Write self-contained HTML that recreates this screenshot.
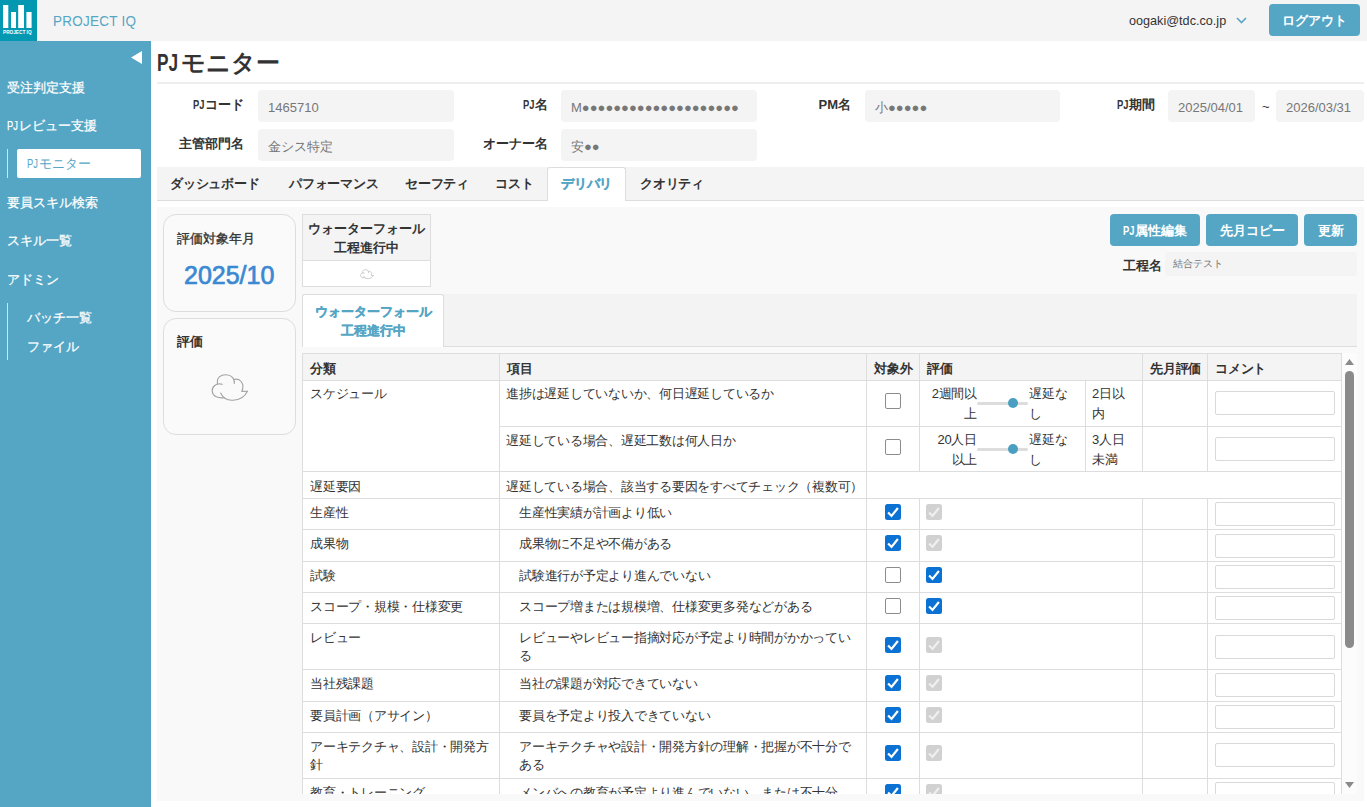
<!DOCTYPE html>
<html><head><meta charset="utf-8">
<style>
*{box-sizing:border-box;margin:0;padding:0}
html,body{width:1367px;height:807px;overflow:hidden;background:#fff}
body{font-family:"Liberation Sans",sans-serif;color:#333;position:relative;font-size:13px}
.abs{position:absolute;white-space:nowrap}
#hdr{position:absolute;left:0;top:0;width:1367px;height:41px;background:#f4f4f4}
#logo{position:absolute;left:0;top:0;width:37px;height:41px;background:#0398b2}
#side{position:absolute;left:0;top:41px;width:151px;height:766px;background:#55a6c5}
.nav{position:absolute;left:7px;color:#fff;font-size:13px;line-height:20px;white-space:nowrap;-webkit-text-stroke:.25px #fff}
.btn{position:absolute;background:#55a6c5;color:#fff;border-radius:4px;font-size:13px;font-weight:bold;text-align:center;line-height:34px;height:32px;white-space:nowrap}
.lbl{position:absolute;font-weight:bold;font-size:13px;line-height:20px;text-align:right;white-space:nowrap}
.inp{position:absolute;background:#f4f4f4;border-radius:4px;height:32px;color:#777;font-size:13px;line-height:20px;padding-top:8px;padding-left:10px;white-space:nowrap}
#tabs{position:absolute;left:157px;top:167px;width:1207px;height:34px;background:#f4f4f4;border-bottom:1px solid #ddd}
.tab{position:absolute;top:0;height:33px;line-height:33px;font-weight:bold;font-size:13px;letter-spacing:-.25px;white-space:nowrap}
#panel{position:absolute;left:157px;top:207px;width:1207px;height:594px;background:#f9f9f9}
.pj{display:inline-block;transform:scaleX(.72);transform-origin:0 0;margin-right:-.24em}
.lbl .pj,.btn .pj{margin-right:-.31em}
.card{position:absolute;left:163px;width:133px;background:#fafafa;border:1px solid #ddd;border-radius:13px}
</style></head><body>
<div id="hdr"></div>
<div id="logo">
  <svg width="37" height="41" viewBox="0 0 37 41" style="position:absolute;left:0;top:0">
    <rect x="3" y="5" width="5.3" height="23" fill="#fff"/>
    <rect x="11" y="12" width="5" height="16" fill="#fff"/>
    <rect x="18.2" y="5" width="5.8" height="23" fill="#fff"/>
    <rect x="26.4" y="12" width="5.2" height="16" fill="#fff"/>
    <text x="3" y="34.2" font-size="4.9" fill="#fff" font-family="Liberation Sans" font-weight="bold" textLength="28.6" lengthAdjust="spacingAndGlyphs">PROJECT IQ</text>
  </svg>
</div>
<div class="abs" style="left:53px;top:11px;font-size:15.5px;line-height:20px;color:#55a6c5;letter-spacing:.3px;transform:scaleX(.87);transform-origin:0 0">PROJECT IQ</div>
<div class="abs" style="left:1129px;top:11px;font-size:13.6px;line-height:20px;color:#333;transform:scaleX(.93);transform-origin:0 0">oogaki@tdc.co.jp</div>
<svg class="abs" style="left:1236px;top:17px" width="11" height="7" viewBox="0 0 11 7"><path d="M1 1 L5.5 5.5 L10 1" stroke="#55a6c5" stroke-width="1.6" fill="none"/></svg>
<div class="btn" style="left:1269px;top:4px;width:91px">ログアウト</div>

<div id="side">
  <svg class="abs" style="left:131px;top:10px" width="12" height="13" viewBox="0 0 12 13"><path d="M0 6.5 L11 0 L11 13 Z" fill="#fff"/></svg>
  <div class="nav" style="top:37px">受注判定支援</div>
  <div class="nav" style="top:75px"><span class="pj">PJ</span>レビュー支援</div>
  <div class="abs" style="left:7px;top:108px;width:1px;height:29px;background:#cfe5ee"></div>
  <div class="abs" style="left:17px;top:108px;width:124px;height:29px;background:#fff;border-radius:2px;color:#55a6c5;font-size:13px;line-height:29px;padding-left:10px"><span class="pj">PJ</span>モニター</div>
  <div class="nav" style="top:152px">要員スキル検索</div>
  <div class="nav" style="top:190px">スキル一覧</div>
  <div class="nav" style="top:229px">アドミン</div>
  <div class="abs" style="left:7px;top:262px;width:1px;height:57px;background:#cfe5ee"></div>
  <div class="nav" style="left:27px;top:267px">バッチ一覧</div>
  <div class="nav" style="left:27px;top:296px">ファイル</div>
</div>

<div class="abs" style="left:157px;top:48px;font-size:24px;line-height:30px;font-weight:bold;color:#333"><span class="pj">PJ</span>モニター</div>
<div class="abs" style="left:157px;top:82px;width:1207px;height:2px;background:#eee"></div>

<div class="lbl" style="left:157px;top:95px;width:87px"><span class="pj">PJ</span>コード</div>
<div class="inp" style="left:258px;top:90px;width:196px">1465710</div>
<div class="lbl" style="left:454px;top:95px;width:94px"><span class="pj">PJ</span>名</div>
<div class="inp" style="left:561px;top:90px;width:196px">M●●●●●●●●●●●●●●●●●●●●</div>
<div class="lbl" style="left:757px;top:95px;width:94px">PM名</div>
<div class="inp" style="left:865px;top:90px;width:195px">小●●●●●</div>
<div class="lbl" style="left:1060px;top:95px;width:95px"><span class="pj">PJ</span>期間</div>
<div class="inp" style="left:1168px;top:90px;width:87px">2025/04/01</div>
<div class="abs" style="left:1262px;top:97px;font-size:13px;line-height:20px">~</div>
<div class="inp" style="left:1276px;top:90px;width:88px">2026/03/31</div>

<div class="lbl" style="left:157px;top:134px;width:87px">主管部門名</div>
<div class="inp" style="left:258px;top:129px;width:196px">金シス特定</div>
<div class="lbl" style="left:454px;top:134px;width:94px">オーナー名</div>
<div class="inp" style="left:561px;top:129px;width:196px">安●●</div>

<div id="tabs">
  <div class="tab" style="left:13px">ダッシュボード</div>
  <div class="tab" style="left:132px">パフォーマンス</div>
  <div class="tab" style="left:248px">セーフティ</div>
  <div class="tab" style="left:338px">コスト</div>
  <div class="tab" style="left:390px;top:0;width:79px;height:34px;background:#fff;border:1px solid #ddd;border-bottom:none;border-radius:3px 3px 0 0;color:#55a6c5;padding-left:13px;line-height:32px;-webkit-text-stroke:.3px #55a6c5">デリバリ</div>
  <div class="tab" style="left:483px">クオリティ</div>
</div>

<div id="panel"></div>
<div class="card" style="top:214px;height:98px">
  <div class="abs" style="left:13px;top:14px;font-size:13px;line-height:20px;-webkit-text-stroke:.35px #333">評価対象年月</div>
  <div class="abs" style="left:20px;top:45px;font-size:25px;line-height:30px;color:#3a89d2;-webkit-text-stroke:.7px #3a89d2">2025/10</div>
</div>
<div class="card" style="top:318px;height:117px">
  <div class="abs" style="left:13px;top:13px;font-size:13px;line-height:20px;font-weight:bold">評価</div>
  
</div>

<div class="abs" style="left:302px;top:214px;width:129px;height:73px;border:1px solid #ddd;background:#fff">
  <div style="height:46px;background:#f4f4f4;border-bottom:1px solid #ddd;font-weight:bold;font-size:13px;line-height:19px;text-align:center;padding-top:4px">ウォーターフォール<br>工程進行中</div>
</div>

<div class="btn" style="left:1110px;top:214px;width:90px"><span class="pj">PJ</span>属性編集</div>
<div class="btn" style="left:1206px;top:214px;width:92px">先月コピー</div>
<div class="btn" style="left:1304px;top:214px;width:53px">更新</div>
<div class="lbl" style="left:1100px;top:256px;width:62px;font-size:13px">工程名</div>
<div class="inp" style="left:1165px;top:252px;width:192px;height:24px;line-height:24px;padding-top:0;font-size:10px;padding-left:8px">結合テスト</div>

<div class="abs" style="left:302px;top:294px;width:1055px;height:53px;background:#f3f3f3;border-bottom:1px solid #ddd"></div>
<div class="abs" style="left:302px;top:294px;width:142px;height:53px;background:#fff;border:1px solid #ddd;border-bottom:none;border-radius:3px 3px 0 0;color:#55a6c5;font-weight:bold;font-size:13px;line-height:19px;text-align:center;padding-top:7px;-webkit-text-stroke:.3px #55a6c5">ウォーターフォール<br>工程進行中</div>

<svg style="position:absolute;left:208px;top:370px" width="44" height="34" viewBox="208 370 44 34"><g stroke="#a3a3a3" stroke-width="1.1"><g fill="none" stroke-linecap="round">
<path d="M217.5 383.6 C216.5 377.5 220.5 374.8 226 374.8 C231.5 374.8 235 378.5 234.3 383.5"/>
<path d="M233.7 379.6 C240 377.6 245 383.5 241.9 391.4 L247.4 391.3"/>
<path d="M222.3 384.3 C216 382.5 211.8 387 212.2 391 C212.5 396 217 398.5 224.6 397.8"/>
<path d="M220.6 393 C223.5 399 229 400.5 233 400.2 C240 400 245 396.5 247.4 391.3"/>
</g></g></svg>
<svg style="position:absolute;left:359px;top:268px" width="16" height="12" viewBox="208 370 44 34" preserveAspectRatio="none"><g stroke="#c8c8c8" stroke-width="2.6"><g fill="none" stroke-linecap="round">
<path d="M217.5 383.6 C216.5 377.5 220.5 374.8 226 374.8 C231.5 374.8 235 378.5 234.3 383.5"/>
<path d="M233.7 379.6 C240 377.6 245 383.5 241.9 391.4 L247.4 391.3"/>
<path d="M222.3 384.3 C216 382.5 211.8 387 212.2 391 C212.5 396 217 398.5 224.6 397.8"/>
<path d="M220.6 393 C223.5 399 229 400.5 233 400.2 C240 400 245 396.5 247.4 391.3"/>
</g></g></svg>
<style>.t{position:absolute;white-space:nowrap;font-size:13px;line-height:18px;color:#333;letter-spacing:-.25px}</style><div style="position:absolute;left:302px;top:353px;width:1055px;height:441px;overflow:hidden;background:#fff"><div style="position:absolute;left:0px;top:0px;width:1040px;height:27px;background:#f4f4f4"></div><div style="position:absolute;left:0px;top:0px;width:1040px;height:1px;background:#ddd"></div><div style="position:absolute;left:0px;top:27px;width:1040px;height:1px;background:#ddd"></div><div style="position:absolute;left:197px;top:73px;width:843px;height:1px;background:#ddd"></div><div style="position:absolute;left:0px;top:118px;width:1040px;height:1px;background:#ddd"></div><div style="position:absolute;left:0px;top:145px;width:1040px;height:1px;background:#ddd"></div><div style="position:absolute;left:0px;top:176px;width:1040px;height:1px;background:#ddd"></div><div style="position:absolute;left:0px;top:208px;width:1040px;height:1px;background:#ddd"></div><div style="position:absolute;left:0px;top:239px;width:1040px;height:1px;background:#ddd"></div><div style="position:absolute;left:0px;top:270px;width:1040px;height:1px;background:#ddd"></div><div style="position:absolute;left:0px;top:316px;width:1040px;height:1px;background:#ddd"></div><div style="position:absolute;left:0px;top:348px;width:1040px;height:1px;background:#ddd"></div><div style="position:absolute;left:0px;top:379px;width:1040px;height:1px;background:#ddd"></div><div style="position:absolute;left:0px;top:425px;width:1040px;height:1px;background:#ddd"></div><div style="position:absolute;left:0px;top:471px;width:1040px;height:1px;background:#ddd"></div><div style="position:absolute;left:0px;top:0px;width:1px;height:28px;background:#ddd"></div><div style="position:absolute;left:197px;top:0px;width:1px;height:28px;background:#ddd"></div><div style="position:absolute;left:564px;top:0px;width:1px;height:28px;background:#ddd"></div><div style="position:absolute;left:617px;top:0px;width:1px;height:28px;background:#ddd"></div><div style="position:absolute;left:840px;top:0px;width:1px;height:28px;background:#ddd"></div><div style="position:absolute;left:905px;top:0px;width:1px;height:28px;background:#ddd"></div><div style="position:absolute;left:1039px;top:0px;width:1px;height:28px;background:#ddd"></div><div style="position:absolute;left:0px;top:27px;width:1px;height:92px;background:#ddd"></div><div style="position:absolute;left:197px;top:27px;width:1px;height:92px;background:#ddd"></div><div style="position:absolute;left:564px;top:27px;width:1px;height:92px;background:#ddd"></div><div style="position:absolute;left:617px;top:27px;width:1px;height:92px;background:#ddd"></div><div style="position:absolute;left:783px;top:27px;width:1px;height:92px;background:#ddd"></div><div style="position:absolute;left:840px;top:27px;width:1px;height:92px;background:#ddd"></div><div style="position:absolute;left:905px;top:27px;width:1px;height:92px;background:#ddd"></div><div style="position:absolute;left:1039px;top:27px;width:1px;height:92px;background:#ddd"></div><div style="position:absolute;left:0px;top:118px;width:1px;height:28px;background:#ddd"></div><div style="position:absolute;left:197px;top:118px;width:1px;height:28px;background:#ddd"></div><div style="position:absolute;left:564px;top:118px;width:1px;height:28px;background:#ddd"></div><div style="position:absolute;left:1039px;top:118px;width:1px;height:28px;background:#ddd"></div><div style="position:absolute;left:0px;top:145px;width:1px;height:327px;background:#ddd"></div><div style="position:absolute;left:197px;top:145px;width:1px;height:327px;background:#ddd"></div><div style="position:absolute;left:564px;top:145px;width:1px;height:327px;background:#ddd"></div><div style="position:absolute;left:617px;top:145px;width:1px;height:327px;background:#ddd"></div><div style="position:absolute;left:840px;top:145px;width:1px;height:327px;background:#ddd"></div><div style="position:absolute;left:905px;top:145px;width:1px;height:327px;background:#ddd"></div><div style="position:absolute;left:1039px;top:145px;width:1px;height:327px;background:#ddd"></div><div class="t" style="left:8px;top:7px;font-weight:bold">分類</div><div class="t" style="left:205px;top:7px;font-weight:bold">項目</div><div class="t" style="left:572px;top:7px;font-weight:bold">対象外</div><div class="t" style="left:625px;top:7px;font-weight:bold">評価</div><div class="t" style="left:848px;top:7px;font-weight:bold">先月評価</div><div class="t" style="left:913px;top:7px;font-weight:bold">コメント</div><div class="t" style="left:8px;top:32px;">スケジュール</div><div class="t" style="left:204px;top:32px;">進捗は遅延していないか、何日遅延しているか</div><div style="position:absolute;left:583px;top:40px;width:16px;height:16px;background:#fff;border:1px solid #8c8c8c;border-radius:2px;box-sizing:border-box"></div><div class="t" style="left:624px;top:31px;width:51px;text-align:right;line-height:20px">2週間以<br>上</div><div style="position:absolute;left:675px;top:49px;width:51px;height:3px;background:#ddd;border-radius:1.5px"></div><div style="position:absolute;left:706px;top:45px;width:10px;height:10px;background:#4a9fc1;border-radius:50%"></div><div class="t" style="left:727px;top:31px;line-height:20px">遅延な<br>し</div><div class="t" style="left:790px;top:31px;line-height:20px">2日以<br>内</div><div style="position:absolute;left:913px;top:38px;width:120px;height:24px;background:#fff;border:1px solid #d9d9d9;border-radius:2px;box-sizing:border-box"></div><div class="t" style="left:204px;top:79px;">遅延している場合、遅延工数は何人日か</div><div style="position:absolute;left:583px;top:86px;width:16px;height:16px;background:#fff;border:1px solid #8c8c8c;border-radius:2px;box-sizing:border-box"></div><div class="t" style="left:624px;top:77px;width:51px;text-align:right;line-height:20px">20人日<br>以上</div><div style="position:absolute;left:675px;top:95px;width:51px;height:3px;background:#ddd;border-radius:1.5px"></div><div style="position:absolute;left:706px;top:91px;width:10px;height:10px;background:#4a9fc1;border-radius:50%"></div><div class="t" style="left:727px;top:77px;line-height:20px">遅延な<br>し</div><div class="t" style="left:790px;top:77px;line-height:20px">3人日<br>未満</div><div style="position:absolute;left:913px;top:84px;width:120px;height:24px;background:#fff;border:1px solid #d9d9d9;border-radius:2px;box-sizing:border-box"></div><div class="t" style="left:8px;top:125px;">遅延要因</div><div class="t" style="left:204px;top:125px;">遅延している場合、該当する要因をすべてチェック（複数可）</div><div class="t" style="left:8px;top:151px;">生産性</div><div class="t" style="left:217px;top:151px;">生産性実績が計画より低い</div><div style="position:absolute;left:583px;top:151px;width:16px;height:16px;background:#0b72d4;border-radius:2.5px"><svg width="16" height="16" viewBox="0 0 16 16" style="position:absolute;left:0;top:0"><path d="M3.1 8.4 L6.5 11.9 L12.9 4.0" stroke="#fff" stroke-width="2.2" fill="none" stroke-linecap="butt"/></svg></div><div style="position:absolute;left:624px;top:151px;width:16px;height:16px;background:#d1d1d1;border-radius:2.5px"><svg width="16" height="16" viewBox="0 0 16 16" style="position:absolute;left:0;top:0"><path d="M3.1 8.4 L6.5 11.9 L12.9 4.0" stroke="#efefef" stroke-width="2.2" fill="none" stroke-linecap="butt"/></svg></div><div style="position:absolute;left:913px;top:149px;width:120px;height:24px;background:#fff;border:1px solid #d9d9d9;border-radius:2px;box-sizing:border-box"></div><div class="t" style="left:8px;top:182px;">成果物</div><div class="t" style="left:217px;top:182px;">成果物に不足や不備がある</div><div style="position:absolute;left:583px;top:182px;width:16px;height:16px;background:#0b72d4;border-radius:2.5px"><svg width="16" height="16" viewBox="0 0 16 16" style="position:absolute;left:0;top:0"><path d="M3.1 8.4 L6.5 11.9 L12.9 4.0" stroke="#fff" stroke-width="2.2" fill="none" stroke-linecap="butt"/></svg></div><div style="position:absolute;left:624px;top:182px;width:16px;height:16px;background:#d1d1d1;border-radius:2.5px"><svg width="16" height="16" viewBox="0 0 16 16" style="position:absolute;left:0;top:0"><path d="M3.1 8.4 L6.5 11.9 L12.9 4.0" stroke="#efefef" stroke-width="2.2" fill="none" stroke-linecap="butt"/></svg></div><div style="position:absolute;left:913px;top:181px;width:120px;height:24px;background:#fff;border:1px solid #d9d9d9;border-radius:2px;box-sizing:border-box"></div><div class="t" style="left:8px;top:214px;">試験</div><div class="t" style="left:217px;top:214px;">試験進行が予定より進んでいない</div><div style="position:absolute;left:583px;top:214px;width:16px;height:16px;background:#fff;border:1px solid #8c8c8c;border-radius:2px;box-sizing:border-box"></div><div style="position:absolute;left:624px;top:214px;width:16px;height:16px;background:#0b72d4;border-radius:2.5px"><svg width="16" height="16" viewBox="0 0 16 16" style="position:absolute;left:0;top:0"><path d="M3.1 8.4 L6.5 11.9 L12.9 4.0" stroke="#fff" stroke-width="2.2" fill="none" stroke-linecap="butt"/></svg></div><div style="position:absolute;left:913px;top:212px;width:120px;height:24px;background:#fff;border:1px solid #d9d9d9;border-radius:2px;box-sizing:border-box"></div><div class="t" style="left:8px;top:245px;">スコープ・規模・仕様変更</div><div class="t" style="left:217px;top:245px;">スコープ増または規模増、仕様変更多発などがある</div><div style="position:absolute;left:583px;top:245px;width:16px;height:16px;background:#fff;border:1px solid #8c8c8c;border-radius:2px;box-sizing:border-box"></div><div style="position:absolute;left:624px;top:245px;width:16px;height:16px;background:#0b72d4;border-radius:2.5px"><svg width="16" height="16" viewBox="0 0 16 16" style="position:absolute;left:0;top:0"><path d="M3.1 8.4 L6.5 11.9 L12.9 4.0" stroke="#fff" stroke-width="2.2" fill="none" stroke-linecap="butt"/></svg></div><div style="position:absolute;left:913px;top:243px;width:120px;height:24px;background:#fff;border:1px solid #d9d9d9;border-radius:2px;box-sizing:border-box"></div><div class="t" style="left:8px;top:276px;">レビュー</div><div class="t" style="left:217px;top:276px;">レビューやレビュー指摘対応が予定より時間がかかってい<br>る</div><div style="position:absolute;left:583px;top:284px;width:16px;height:16px;background:#0b72d4;border-radius:2.5px"><svg width="16" height="16" viewBox="0 0 16 16" style="position:absolute;left:0;top:0"><path d="M3.1 8.4 L6.5 11.9 L12.9 4.0" stroke="#fff" stroke-width="2.2" fill="none" stroke-linecap="butt"/></svg></div><div style="position:absolute;left:624px;top:284px;width:16px;height:16px;background:#d1d1d1;border-radius:2.5px"><svg width="16" height="16" viewBox="0 0 16 16" style="position:absolute;left:0;top:0"><path d="M3.1 8.4 L6.5 11.9 L12.9 4.0" stroke="#efefef" stroke-width="2.2" fill="none" stroke-linecap="butt"/></svg></div><div style="position:absolute;left:913px;top:282px;width:120px;height:24px;background:#fff;border:1px solid #d9d9d9;border-radius:2px;box-sizing:border-box"></div><div class="t" style="left:8px;top:322px;">当社残課題</div><div class="t" style="left:217px;top:322px;">当社の課題が対応できていない</div><div style="position:absolute;left:583px;top:322px;width:16px;height:16px;background:#0b72d4;border-radius:2.5px"><svg width="16" height="16" viewBox="0 0 16 16" style="position:absolute;left:0;top:0"><path d="M3.1 8.4 L6.5 11.9 L12.9 4.0" stroke="#fff" stroke-width="2.2" fill="none" stroke-linecap="butt"/></svg></div><div style="position:absolute;left:624px;top:322px;width:16px;height:16px;background:#d1d1d1;border-radius:2.5px"><svg width="16" height="16" viewBox="0 0 16 16" style="position:absolute;left:0;top:0"><path d="M3.1 8.4 L6.5 11.9 L12.9 4.0" stroke="#efefef" stroke-width="2.2" fill="none" stroke-linecap="butt"/></svg></div><div style="position:absolute;left:913px;top:320px;width:120px;height:24px;background:#fff;border:1px solid #d9d9d9;border-radius:2px;box-sizing:border-box"></div><div class="t" style="left:8px;top:354px;">要員計画（アサイン）</div><div class="t" style="left:217px;top:354px;">要員を予定より投入できていない</div><div style="position:absolute;left:583px;top:354px;width:16px;height:16px;background:#0b72d4;border-radius:2.5px"><svg width="16" height="16" viewBox="0 0 16 16" style="position:absolute;left:0;top:0"><path d="M3.1 8.4 L6.5 11.9 L12.9 4.0" stroke="#fff" stroke-width="2.2" fill="none" stroke-linecap="butt"/></svg></div><div style="position:absolute;left:624px;top:354px;width:16px;height:16px;background:#d1d1d1;border-radius:2.5px"><svg width="16" height="16" viewBox="0 0 16 16" style="position:absolute;left:0;top:0"><path d="M3.1 8.4 L6.5 11.9 L12.9 4.0" stroke="#efefef" stroke-width="2.2" fill="none" stroke-linecap="butt"/></svg></div><div style="position:absolute;left:913px;top:352px;width:120px;height:24px;background:#fff;border:1px solid #d9d9d9;border-radius:2px;box-sizing:border-box"></div><div class="t" style="left:8px;top:385px;">アーキテクチャ、設計・開発方<br>針</div><div class="t" style="left:217px;top:385px;">アーキテクチャや設計・開発方針の理解・把握が不十分で<br>ある</div><div style="position:absolute;left:583px;top:392px;width:16px;height:16px;background:#0b72d4;border-radius:2.5px"><svg width="16" height="16" viewBox="0 0 16 16" style="position:absolute;left:0;top:0"><path d="M3.1 8.4 L6.5 11.9 L12.9 4.0" stroke="#fff" stroke-width="2.2" fill="none" stroke-linecap="butt"/></svg></div><div style="position:absolute;left:624px;top:392px;width:16px;height:16px;background:#d1d1d1;border-radius:2.5px"><svg width="16" height="16" viewBox="0 0 16 16" style="position:absolute;left:0;top:0"><path d="M3.1 8.4 L6.5 11.9 L12.9 4.0" stroke="#efefef" stroke-width="2.2" fill="none" stroke-linecap="butt"/></svg></div><div style="position:absolute;left:913px;top:390px;width:120px;height:24px;background:#fff;border:1px solid #d9d9d9;border-radius:2px;box-sizing:border-box"></div><div class="t" style="left:8px;top:431px;">教育・トレーニング</div><div class="t" style="left:217px;top:431px;">メンバへの教育が予定より進んでいない、または不十分</div><div style="position:absolute;left:583px;top:431px;width:16px;height:16px;background:#0b72d4;border-radius:2.5px"><svg width="16" height="16" viewBox="0 0 16 16" style="position:absolute;left:0;top:0"><path d="M3.1 8.4 L6.5 11.9 L12.9 4.0" stroke="#fff" stroke-width="2.2" fill="none" stroke-linecap="butt"/></svg></div><div style="position:absolute;left:624px;top:431px;width:16px;height:16px;background:#d1d1d1;border-radius:2.5px"><svg width="16" height="16" viewBox="0 0 16 16" style="position:absolute;left:0;top:0"><path d="M3.1 8.4 L6.5 11.9 L12.9 4.0" stroke="#efefef" stroke-width="2.2" fill="none" stroke-linecap="butt"/></svg></div><div style="position:absolute;left:913px;top:429px;width:120px;height:24px;background:#fff;border:1px solid #d9d9d9;border-radius:2px;box-sizing:border-box"></div><div style="position:absolute;left:1040px;top:0px;width:15px;height:441px;background:#fcfcfc"></div><svg style="position:absolute;left:1043px;top:6px" width="9" height="6" viewBox="0 0 9 6"><path d="M0 6 L4.5 0 L9 6Z" fill="#8a8a8a"/></svg><div style="position:absolute;left:1043px;top:18px;width:9px;height:277px;background:#8a8a8a;border-radius:4.5px"></div><svg style="position:absolute;left:1043px;top:429px" width="9" height="6" viewBox="0 0 9 6"><path d="M0 0 L9 0 L4.5 6Z" fill="#8a8a8a"/></svg></div>
</body></html>
